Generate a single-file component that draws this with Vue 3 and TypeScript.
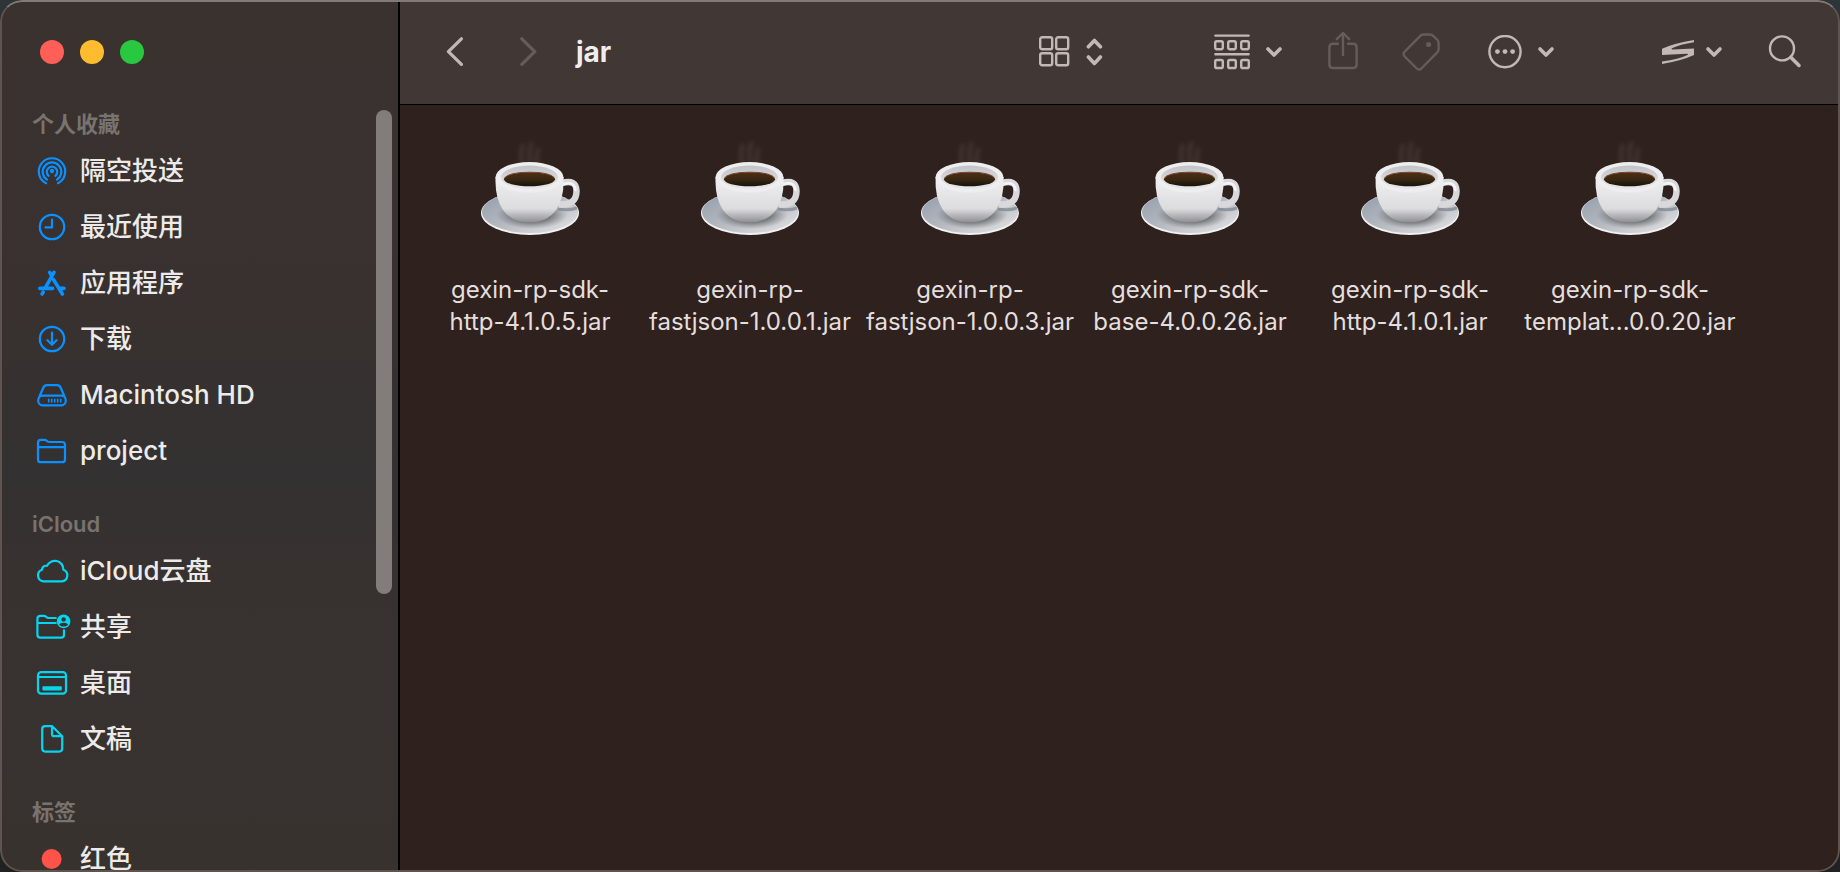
<script setup lang="ts">
import { ref } from 'vue'

type IconName =
  | 'airdrop' | 'clock' | 'apps' | 'download' | 'disk' | 'folder'
  | 'cloud' | 'shared' | 'desktop' | 'document' | 'tag-red'

interface Place { label: string; icon: IconName }
interface Section { title: string; tone: 'blue' | 'cyan' | 'red'; places: Place[] }
interface JarFile { id: number; lines: [string, string] }

const sections: Section[] = [
  {
    title: '个人收藏',
    tone: 'blue',
    places: [
      { label: '隔空投送', icon: 'airdrop' },
      { label: '最近使用', icon: 'clock' },
      { label: '应用程序', icon: 'apps' },
      { label: '下载', icon: 'download' },
      { label: 'Macintosh HD', icon: 'disk' },
      { label: 'project', icon: 'folder' },
    ],
  },
  {
    title: 'iCloud',
    tone: 'cyan',
    places: [
      { label: 'iCloud云盘', icon: 'cloud' },
      { label: '共享', icon: 'shared' },
      { label: '桌面', icon: 'desktop' },
      { label: '文稿', icon: 'document' },
    ],
  },
  { title: '标签', tone: 'red', places: [{ label: '红色', icon: 'tag-red' }] },
]

const files: JarFile[] = [
  { id: 1, lines: ['gexin-rp-sdk-', 'http-4.1.0.5.jar'] },
  { id: 2, lines: ['gexin-rp-', 'fastjson-1.0.0.1.jar'] },
  { id: 3, lines: ['gexin-rp-', 'fastjson-1.0.0.3.jar'] },
  { id: 4, lines: ['gexin-rp-sdk-', 'base-4.0.0.26.jar'] },
  { id: 5, lines: ['gexin-rp-sdk-', 'http-4.1.0.1.jar'] },
  { id: 6, lines: ['gexin-rp-sdk-', 'templat...0.0.20.jar'] },
]

const selected = ref<number | null>(null)
</script>

<template>
  <div class="desktop">
    <div class="window">
      <aside class="sidebar">
        <div class="lights">
          <button type="button" class="light close" aria-label="关闭"></button>
          <button type="button" class="light minimize" aria-label="最小化"></button>
          <button type="button" class="light zoom" aria-label="缩放"></button>
        </div>
        <nav class="places">
          <section v-for="s in sections" :key="s.title" class="section" :class="s.tone">
            <h2 class="heading">{{ s.title }}</h2>
            <ul class="list">
              <li v-for="p in s.places" :key="p.label">
                <a href="#" class="place" @click.prevent>
                  <svg class="place-icon" viewBox="0 0 36 32" aria-hidden="true">
                    <g v-if="p.icon === 'airdrop'">
                      <circle cx="16" cy="16" r="2.2" class="fill" />
                      <path d="M12.6 20.8A5.2 5.2 0 1 1 19.4 20.8M11 24.6A9.3 9.3 0 1 1 21 24.6M10 28.2A13.2 13.2 0 1 1 22 28.2" />
                    </g>
                    <g v-else-if="p.icon === 'clock'">
                      <circle cx="16" cy="16" r="12.2" />
                      <path d="M16 8.5V16.4H9.5" />
                    </g>
                    <g v-else-if="p.icon === 'apps'">
                      <path class="thick" d="M18 5.4L9.6 20.4M13.6 5.4L15.4 8.2M17.6 12.6L26.4 27M3.8 21.4H16.6M23.8 21.4H28M7.2 25.2L6 27" />
                    </g>
                    <g v-else-if="p.icon === 'download'">
                      <circle cx="16" cy="16" r="12.2" />
                      <path d="M16 9.5V21.5M11.4 17.2L16 21.8L20.6 17.2" />
                    </g>
                    <g v-else-if="p.icon === 'disk'">
                      <path d="M2.2 21.5C2.2 19 4 16.6 6.5 16.6H25.5C28 16.6 29.800 19 29.800 21.5S28 26.4 25.5 26.4H6.5C4 26.4 2.2 24 2.2 21.5ZM2.9 18.8L7.3 8.8Q8.4 6.2 11 6.2H21Q23.6 6.2 24.7 8.8L29.1 18.8" />
                      <path class="thin" d="M12.7 19.7V23.6M15.7 19.7V23.6M18.7 19.7V23.6M21.7 19.7V23.6M24.7 19.7V23.6" />
                    </g>
                    <g v-else-if="p.icon === 'folder'">
                      <path d="M2 24.4V7.6Q2 4.8 4.8 4.8H8.6Q9.8 4.8 10.7 5.7L11.4 6.4Q12.2 7 13.4 7H26.2Q29 7 29 9.8V24.4Q29 27.2 26.2 27.2H4.8Q2 27.2 2 24.4ZM2 12.2H29" />
                    </g>
                    <g v-else-if="p.icon === 'cloud'">
                      <path d="M7.4 26.400A6 6 0 0 1 6 14.800Q6.400 10.400 11 10.800A8.600 8.600 0 0 1 27.400 14.800A6 6 0 0 1 25.800 26.400Z" />
                    </g>
                    <g v-else-if="p.icon === 'shared'">
                      <path d="M19.8 7H12.6Q11.4 7 10.4 6L9.9 5.6Q9 4.8 7.8 4.8H4.4Q1.4 4.8 1.4 7.8V23.8Q1.4 26.6 4.2 26.6H25.2Q28 26.6 28 23.8V19.4M1.4 12H19.8" />
                      <circle cx="27.6" cy="10.4" r="6.8" class="fill" />
                      <circle cx="27.6" cy="8.400" r="2.200" class="hole" />
                      <path class="hole" d="M23.200 14Q24 11.700 27.600 11.700T32 14Q30.200 15.600 27.600 15.600T23.200 14Z" />
                    </g>
                    <g v-else-if="p.icon === 'desktop'">
                      <rect x="2" y="5.2" width="28" height="21.4" rx="3.2" />
                      <path d="M2 10H30" />
                      <rect x="6.4" y="19.2" width="19.4" height="4.2" rx="0.8" class="fill" />
                    </g>
                    <g v-else-if="p.icon === 'document'">
                      <path d="M6.2 6.2Q6.2 3.2 9.2 3.2H16.2L26.2 13.2V25.6Q26.2 28.6 23.2 28.6H9.2Q6.2 28.6 6.2 25.6ZM16 3.2V11.2Q16 13.2 18 13.2H26.2" />
                    </g>
                    <circle v-else cx="15.6" cy="16" r="10" class="fill" />
                  </svg>
                  <span class="label">{{ p.label }}</span>
                </a>
              </li>
            </ul>
          </section>
        </nav>
        <div class="thumb"></div>
      </aside>

      <main class="content">
        <header class="toolbar">
          <div class="history">
            <button type="button" class="tool" aria-label="返回">
              <svg width="18" height="30" viewBox="0 0 18 30"><path class="w3" d="M15.4 1.8L2.4 14.6L15.4 27.4" /></svg>
            </button>
            <button type="button" class="tool dim" aria-label="前进" disabled>
              <svg width="18" height="30" viewBox="0 0 18 30"><path class="w3" d="M1.800 1.8L14.8 14.6L1.800 27.4" /></svg>
            </button>
            <h1 class="title">jar</h1>
          </div>

          <div class="tools">
            <button type="button" class="tool view" aria-label="显示为图标">
              <svg width="32" height="32" viewBox="0 0 32 32">
                <rect x="1.2" y="1.2" width="12" height="12" rx="2" />
                <rect x="17.2" y="1.2" width="12" height="12" rx="2" />
                <rect x="1.2" y="17.2" width="12" height="12" rx="2" />
                <rect x="17.2" y="17.2" width="12" height="12" rx="2" />
              </svg>
              <svg width="18" height="28" viewBox="0 0 18 28"><path class="w4" d="M2.4 8.8L8.4 2.400L14.4 8.8M2.4 19L8.4 25.400L14.4 19" /></svg>
            </button>
            <button type="button" class="tool group" aria-label="分组">
              <svg width="36" height="36" viewBox="0 0 36 36">
                <path d="M1.4 1.6H34.6M1.4 20.2H34.6" />
                <rect x="1.2" y="7.2" width="7.6" height="8" rx="1.6" />
                <rect x="14.2" y="7.2" width="7.6" height="8" rx="1.6" />
                <rect x="27.2" y="7.2" width="7.6" height="8" rx="1.6" />
                <rect x="1.2" y="26" width="7.6" height="8" rx="1.6" />
                <rect x="14.2" y="26" width="7.6" height="8" rx="1.6" />
                <rect x="27.2" y="26" width="7.6" height="8" rx="1.6" />
              </svg>
              <svg width="18" height="12" viewBox="0 0 18 12"><path class="w4" d="M3 3L9 9L15 3" /></svg>
            </button>
            <button type="button" class="tool dim share" aria-label="共享" disabled>
              <svg width="30" height="42" viewBox="0 0 30 42">
                <path d="M10 12.800H5Q1.4 12.800 1.4 16.400V33.400Q1.4 37 5 37H25Q28.6 37 28.6 33.400V16.400Q28.6 12.800 25 12.800H20M15 24V2.400M8.8 8.200L15 2L21.2 8.200" />
              </svg>
            </button>
            <button type="button" class="tool dim tag" aria-label="标签" disabled>
              <svg width="38" height="38" viewBox="0 0 38 38">
                <path d="M18.600 2.600Q19.800 1.500 21.600 1.500H27.800Q29.800 1.500 31.200 2.900L35.400 7Q36.600 8.200 36.600 10V16.200Q36.600 18 35.300 19.300L19.400 35.500Q17 37.700 14.700 35.500L2.700 23.500Q.5 21 2.700 18.600Z" />
                <circle cx="26.600" cy="11.400" r="2.500" class="fill" />
              </svg>
            </button>
            <button type="button" class="tool more" aria-label="操作">
              <svg width="34" height="34" viewBox="0 0 34 34">
                <circle cx="17" cy="16.6" r="15.6" />
                <circle cx="9.4" cy="16.6" r="2.4" class="fill" />
                <circle cx="17" cy="16.6" r="2.4" class="fill" />
                <circle cx="24.6" cy="16.6" r="2.4" class="fill" />
              </svg>
              <svg width="18" height="12" viewBox="0 0 18 12"><path class="w4" d="M3 3L9 9L15 3" /></svg>
            </button>
            <button type="button" class="tool ext" aria-label="扩展">
              <svg width="32" height="26" viewBox="0 0 32 26">
                <path class="fill" d="M32 1V3.2Q18 5.4 10 9.2Q8.6 10.2 10.6 10.4L32 9.6V16Q20 21.6 0 25V22.6Q17 20 25.4 16Q27 14.8 24.6 14.8L0 16V9.8Q12 4.2 32 1Z" />
              </svg>
              <svg width="18" height="12" viewBox="0 0 18 12"><path class="w4" d="M3 3L9 9L15 3" /></svg>
            </button>
            <button type="button" class="tool search" aria-label="搜索">
              <svg width="34" height="34" viewBox="0 0 34 34">
                <circle cx="14" cy="13.4" r="12" />
                <path class="w4" d="M23 22.4L31 30.4" />
              </svg>
            </button>
          </div>
        </header>

        <div class="files">
          <button
            v-for="f in files"
            :key="f.id"
            type="button"
            class="file"
            :aria-pressed="selected === f.id"
            @click="selected = f.id"
          >
            <svg class="cup" viewBox="0 0 128 128" aria-hidden="true">
              <defs>
                <linearGradient :id="`saucer${f.id}`" x1="0" y1="0" x2="1" y2="1">
                  <stop offset="0" stop-color="#8f9bab" />
                  <stop offset="0.5" stop-color="#b5b9bf" />
                  <stop offset="1" stop-color="#e6e6e7" />
                </linearGradient>
                <linearGradient :id="`body${f.id}`" x1="0" y1="0" x2="0" y2="1">
                  <stop offset="0" stop-color="#f0f0f1" />
                  <stop offset="0.7" stop-color="#dcdcde" />
                  <stop offset="1" stop-color="#8e8e90" />
                </linearGradient>
                <radialGradient :id="`shade${f.id}`">
                  <stop offset="0.4" stop-color="#4d4e52" stop-opacity="0.85" />
                  <stop offset="1" stop-color="#6e7076" stop-opacity="0" />
                </radialGradient>
                <linearGradient :id="`rim${f.id}`" x1="0" y1="0" x2="0" y2="1">
                  <stop offset="0" stop-color="#c0c3c8" />
                  <stop offset="1" stop-color="#e8e8ea" />
                </linearGradient>
                <linearGradient :id="`coffee${f.id}`" x1="0" y1="0" x2="0" y2="1">
                  <stop offset="0" stop-color="#4a2f17" />
                  <stop offset="0.5" stop-color="#3a2812" />
                  <stop offset="1" stop-color="#17130c" />
                </linearGradient>
                <filter :id="`soft${f.id}`" x="-1" y="-1" width="3" height="3">
                  <feGaussianBlur stdDeviation="2" />
                </filter>
              </defs>
              <g :filter="`url(#soft${f.id})`" class="steam">
                <path d="M57 34Q53 26 57 14M65 33Q61 24 66 12M72 34Q69 26 73 18" />
              </g>
              <ellipse cx="64" cy="83" rx="49" ry="22" fill="#f1f1f2" />
              <ellipse cx="64" cy="82" rx="48" ry="21" :fill="`url(#saucer${f.id})`" />
              <ellipse cx="66" cy="85" rx="36" ry="14" :fill="`url(#shade${f.id})`" />
              <path d="M92 79Q103 81 111 78" class="handle-shadow" />
              <path d="M96 53Q110.500 49 110.500 61Q110.500 75.500 93 74.500" class="handle" />
              <path d="M98 54Q109 51 109.500 60" class="handle-light" />
              <path d="M29.600 47Q28.600 68 37 80Q46 92.500 63.500 92.500Q81 92.500 90 80Q98.500 68 97.500 47Z" :fill="`url(#body${f.id})`" />
              <ellipse cx="63.500" cy="47.300" rx="34" ry="15.300" fill="#eeeeef" />
              <ellipse cx="63.500" cy="47.300" rx="28.500" ry="11.700" :fill="`url(#rim${f.id})`" />
              <ellipse cx="63.500" cy="49.200" rx="25.500" ry="7" :fill="`url(#coffee${f.id})`" />
              <path d="M38.200 48.500Q42 42.300 63.500 42.200T88.800 48.500" class="coffee-edge" />
            </svg>
            <span class="file-name"><span>{{ f.lines[0] }}</span><span>{{ f.lines[1] }}</span></span>
          </button>
        </div>
      </main>
    </div>
  </div>
</template>

<style>
html,
body,
#app {
  height: 100%;
}
body {
  margin: 0;
  background: #252729;
}
</style>

<style scoped>
.desktop {
  height: 100%;
  min-height: 480px;
  overflow: hidden;
  background: linear-gradient(#2d3538, #202123);
  font-family: Inter, "Noto Sans CJK SC", sans-serif;
}
.window {
  position: relative;
  display: flex;
  height: 100%;
  border-radius: 22px;
  overflow: hidden;
  background: #2f211e;
}
.window::after {
  content: "";
  position: absolute;
  inset: 0;
  border: 2px solid #5f5450;
  border-top-color: #817b78;
  border-radius: 22px;
  pointer-events: none;
}
button {
  padding: 0;
  border: 0;
  background: none;
  font: inherit;
  color: inherit;
}
.sidebar {
  position: relative;
  box-sizing: border-box;
  flex: none;
  width: 400px;
  border-right: 2px solid #000;
  overflow: hidden;
  background: linear-gradient(#39322f 0%, #38312f 36%, #333131 54%, #373130 64%, #38322f 100%);
}
.lights {
  display: flex;
  gap: 16px;
  height: 24px;
  padding: 40px 0 41px 40px;
}
.light {
  width: 24px;
  height: 24px;
  border-radius: 50%;
}
.close { background: #ff5f57; }
.minimize { background: #febc2e; }
.zoom { background: #28c840; }
.section {
  margin-bottom: 26px;
}
.heading {
  margin: 0;
  padding-left: 32px;
  font-size: 22px;
  line-height: 38px;
  font-weight: 600;
  color: #79736f;
}
.list {
  margin: 0;
  padding: 0;
  list-style: none;
}
.place {
  display: flex;
  align-items: center;
  gap: 8px;
  height: 56px;
  padding-left: 36px;
  color: #ecebea;
  font-size: 26px;
  font-weight: 500;
  line-height: 36px;
  text-decoration: none;
  white-space: nowrap;
}
.place-icon {
  width: 36px;
  height: 32px;
  fill: none;
  stroke: currentColor;
  stroke-width: 2.2;
  stroke-linecap: round;
  stroke-linejoin: round;
}
.blue .place-icon { color: #0a90ff; }
.cyan .place-icon { color: #06d5f0; }
.red .place-icon { color: #ff5249; }
.fill { fill: currentColor; stroke: none; }
.hole { fill: #38322f; stroke: none; }
.place-icon .thick { stroke-width: 3.6; }
.place-icon .thin { stroke-width: 1.6; stroke-linecap: butt; }
.thumb {
  position: absolute;
  top: 110px;
  right: 6px;
  width: 16px;
  height: 484px;
  border-radius: 8px;
  background: #827d7a;
}
.content {
  flex: 1;
  min-width: 0;
}
.toolbar {
  display: flex;
  align-items: center;
  justify-content: space-between;
  box-sizing: border-box;
  height: 105px;
  padding: 0 38px 0 46px;
  border-bottom: 1px solid #000;
  background: #413735;
  color: #c3b8b6;
}
.history,
.tools,
.tool {
  display: flex;
  align-items: center;
}
.history { gap: 56px; }
.title {
  margin: 0 0 0 -18px;
  font-size: 28px;
  line-height: 36px;
  font-weight: 700;
  color: #f0eeed;
}
.tool svg {
  display: block;
  fill: none;
  stroke: currentColor;
  stroke-width: 2.4;
  stroke-linecap: round;
  stroke-linejoin: round;
}
.tool svg .w3 { stroke-width: 3.2; }
.tool svg .w4 { stroke-width: 3.6; }
.tool svg .fill { fill: currentColor; stroke: none; }
.tool { gap: 15px; }
.dim { color: #665c5a; }
.group { margin-left: 110px; }
.share { margin-left: 45px; }
.tag { margin-left: 44px; }
.more { margin-left: 48px; }
.ext { margin-left: 107px; gap: 11px; }
.search { margin-left: 45px; }
.files {
  display: grid;
  grid-template-columns: repeat(auto-fill, 220px);
  padding: 25px 20px;
}
.file {
  display: flex;
  flex-direction: column;
  align-items: center;
  gap: 16px;
  color: #e3dfde;
}
.cup {
  width: 128px;
  height: 128px;
}
.steam {
  fill: none;
  stroke: #b9aeac;
  stroke-width: 4;
  opacity: 0.14;
}
.handle { fill: none; stroke: #d9d9dc; stroke-width: 6.5; }
.handle-light { fill: none; stroke: #f5f5f6; stroke-width: 2.5; stroke-linecap: round; }
.handle-shadow { fill: none; stroke: #78818f; stroke-width: 3; opacity: 0.7; }
.coffee-edge { fill: none; stroke: #7e4526; stroke-width: 1; }
.file-name {
  display: flex;
  flex-direction: column;
  font-size: 24px;
  line-height: 32px;
  font-weight: 400;
  white-space: nowrap;
}
</style>
